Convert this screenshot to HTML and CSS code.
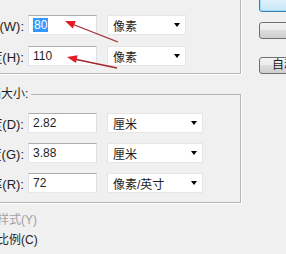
FILE: index.html
```html
<html><head>
<title>图像大小</title>
<link rel="stylesheet" href="styles.css">
</head>
<body>
<div class="dialog">
  <div class="main">
    <fieldset class="group group-pixels">
      <div class="row">
        <span class="label">宽度(W):</span>
        <div class="field"><span class="sel">80</span></div>
        <div class="combo combo-short">像素</div>
      </div>
      <div class="row">
        <span class="label">高度(H):</span>
        <div class="field">110</div>
        <div class="combo combo-short">像素</div>
      </div>
    </fieldset>

    <fieldset class="group group-doc">
      <legend>文档大小:</legend>
      <div class="row">
        <span class="label">宽度(D):</span>
        <div class="field">2.82</div>
        <div class="combo combo-long">厘米</div>
      </div>
      <div class="row">
        <span class="label">高度(G):</span>
        <div class="field">3.88</div>
        <div class="combo combo-long">厘米</div>
      </div>
      <div class="row">
        <span class="label">分辨率(R):</span>
        <div class="field">72</div>
        <div class="combo combo-long">像素/英寸</div>
      </div>
    </fieldset>

    <div class="check check-first disabled">缩放样式(Y)</div>
    <div class="check">约束比例(C)</div>
  </div>

  <div class="buttons">
    <div class="btn btn-default"></div>
    <div class="btn"></div>
    <div class="btn btn-auto">自动(A)...</div>
  </div>
</div>

<!-- annotation arrows drawn over the dialog -->
<svg class="arrows" width="286" height="254" viewBox="0 0 286 254">
  <line x1="118" y1="42" x2="72" y2="24" stroke="#a3242b" stroke-width="1.3"/>
  <polygon points="65,21 75.8,21 72.8,28.4" fill="#e31b23"/>
  <line x1="117" y1="68" x2="74" y2="59" stroke="#a3242b" stroke-width="1.3"/>
  <polygon points="67,57 77.6,55.3 75.9,63.1" fill="#e31b23"/>
</svg>
</body></html>
```

FILE: styles.css
```css
body {
  margin: 0;
  width: 286px;
  height: 254px;
  overflow: hidden;
  position: relative;
  background-color: #f0f0f0;
  font-family: "Liberation Sans", "Noto Sans CJK SC", sans-serif;
  font-size: 12px;
  color: #1e1e1e;
}

.dialog {
  display: flex;
  margin-left: -60px;
}

.main {
  width: 302px;
  flex: none;
}

.group {
  width: 301px;
  box-sizing: border-box;
  margin: 0;
  border: 1px solid #b5b5b5;
  box-shadow: 1px 1px 0 #fff;
}

.group-pixels {
  margin-top: -10px;
  padding: 24px 0 7px;
}

.group-pixels .row + .row {
  margin-top: 11px;
}

.group-doc {
  margin-top: 13px;
  padding: 12px 0 9px;
}

.group-doc .row + .row {
  margin-top: 10px;
}

legend {
  margin-left: 36px;
  padding: 0 3px 0 0;
  line-height: 14px;
}

.row {
  display: flex;
  align-items: center;
  height: 20px;
}

.label {
  width: 83px;
  margin-right: 4px;
  font-size: 13px;
  text-align: right;
  white-space: nowrap;
}

.field {
  width: 69px;
  height: 20px;
  box-sizing: border-box;
  margin-right: 10px;
  padding-left: 4px;
  display: flex;
  align-items: center;
  background-color: #fff;
  border: 1px solid;
  border-color: #abadb3 #dbdfe6 #e3e9ef #e2e3ea;
}

.sel {
  background-color: #3399ff;
  color: #fff;
  padding: 0 1px;
  line-height: 14px;
}

.combo {
  height: 20px;
  box-sizing: border-box;
  padding: 0 5px;
  display: flex;
  align-items: center;
  justify-content: space-between;
  background-color: #fff;
  border: 1px solid #e6e6e6;
}

.combo::after {
  content: "";
  border-left: 3.5px solid transparent;
  border-right: 3.5px solid transparent;
  border-top: 4px solid #000;
}

.combo-short {
  width: 79px;
}

.combo-long {
  width: 96px;
}

.check {
  height: 20px;
  line-height: 20px;
  margin-left: 33px;
  white-space: nowrap;
}

.check-first {
  margin-top: 7px;
}

.disabled {
  color: #a0a0a0;
}

.buttons {
  margin-left: 17px;
  margin-top: -5px;
  display: flex;
  flex-direction: column;
  gap: 10px;
}

.btn {
  width: 75px;
  height: 17px;
  box-sizing: border-box;
  border: 1px solid #707070;
  border-radius: 3px;
  background: linear-gradient(#f2f2f2 0, #ebebeb 50%, #dddddd 50%, #cfcfcf 100%);
  white-space: nowrap;
}

.btn-default {
  border-color: #3c7fb1;
  background: linear-gradient(#eaf6fd, #c6e6f7);
  box-shadow: inset 0 0 0 1px #9ddcfc;
}

.btn-auto {
  margin-top: 8px;
  padding-left: 12px;
  line-height: 15px;
}

.arrows {
  position: absolute;
  left: 0;
  top: 0;
}
```
